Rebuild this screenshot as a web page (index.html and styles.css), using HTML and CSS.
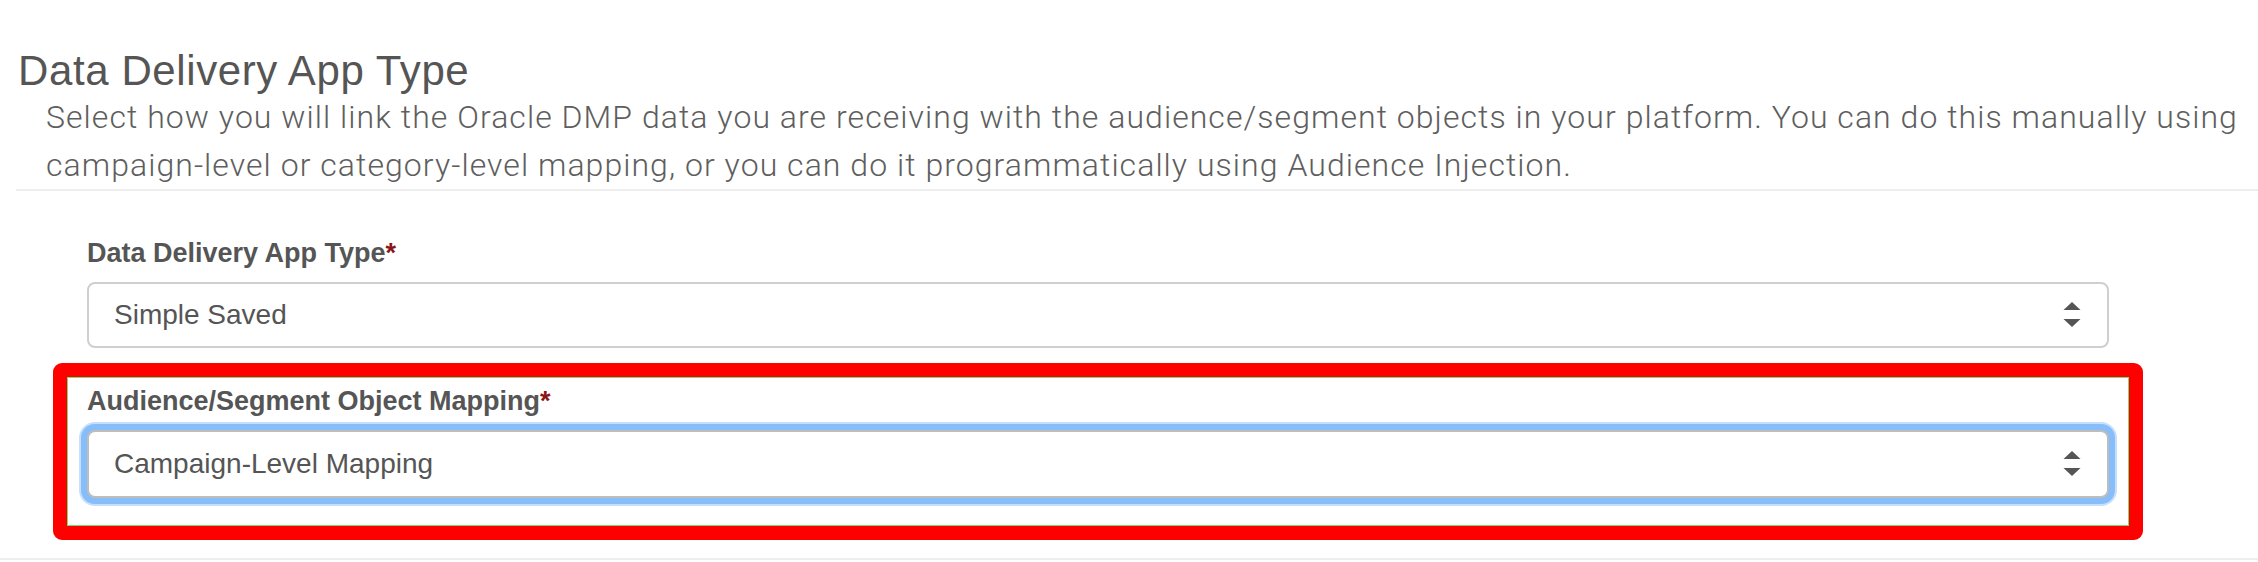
FILE: index.html
```html
<!DOCTYPE html>
<html lang="en">
<head>
<meta charset="utf-8">
<title>Data Delivery App Type</title>
<link rel="stylesheet" href="styles.css">
</head>
<body>
<div class="page">
  <section class="intro">
    <h1 class="intro-title">Data Delivery App Type</h1>
    <p class="intro-desc">Select how you will link the Oracle DMP data you are receiving with the audience/segment objects in your platform. You can do this manually using campaign-level or category-level mapping, or you can do it programmatically using Audience Injection.</p>
  </section>
  <section class="form">
    <div class="field">
      <label class="field-label">Data Delivery App Type<span class="req">*</span></label>
      <div class="select">
        <span class="select-value">Simple Saved</span>
        <svg class="select-arrows" width="18" height="26" viewBox="0 0 18 26"><path d="M9 0 L17.5 8 L0.5 8 Z" fill="#555"/><path d="M0.5 17 L17.5 17 L9 25 Z" fill="#555"/></svg>
      </div>
    </div>
    <div class="field highlight">
      <label class="field-label">Audience/Segment Object Mapping<span class="req">*</span></label>
      <div class="select focused">
        <span class="select-value">Campaign-Level Mapping</span>
        <svg class="select-arrows" width="18" height="26" viewBox="0 0 18 26"><path d="M9 0 L17.5 8 L0.5 8 Z" fill="#555"/><path d="M0.5 17 L17.5 17 L9 25 Z" fill="#555"/></svg>
      </div>
    </div>
  </section>
</div>
</body>
</html>
```

FILE: styles.css
```css
html, body {
  margin: 0;
  padding: 0;
  background: #fff;
}

.page {
  width: 2258px;
  color: #555;
  font-family: "Liberation Sans", Arial, sans-serif;
}

.intro {
  padding-left: 16px;
}

.intro-title {
  margin: 0;
  padding-top: 48px;
  padding-left: 2px;
  font-size: 42px;
  line-height: 45px;
  letter-spacing: 0.6px;
  font-weight: 400;
  color: #555;
}

.intro-desc {
  margin: 0;
  padding-left: 30px;
  padding-right: 0;
  font-family: "Roboto", "Liberation Sans", sans-serif;
  font-weight: 300;
  font-size: 32px;
  line-height: 48px;
  letter-spacing: 1.05px;
  color: #5e5e5e;
  border-bottom: 2px solid #eeeeee;
}

.form {
  display: flex;
  flex-direction: column;
  gap: 15px;
  padding: 46px 149px 18px 87px;
  border-bottom: 2px solid #eeeeee;
}

.field {
  display: flex;
  flex-direction: column;
  gap: 13px;
}

.field-label {
  display: block;
  font-size: 27px;
  line-height: 32px;
  font-weight: 700;
  color: #555;
}

.req {
  color: #8b1414;
}

.select {
  display: flex;
  align-items: center;
  justify-content: space-between;
  height: 66px;
  box-sizing: border-box;
  padding: 0 26px 0 25px;
  border: 2px solid #cfcfcf;
  border-radius: 8px;
  background: #fff;
  font-size: 28px;
  color: #555;
}

.select.focused {
  height: 68px;
  border-color: #bdbdbd;
  box-shadow: 0 0 0 6px #87bdf8, 0 0 0 8px #c4e0fd;
}

.highlight {
  margin: 0 -34px;
  padding: 8px 20px 28px;
  border: 14px solid #ff0000;
  border-radius: 9px;
  box-shadow: inset 0 0 0 1px #6fe06f;
}
```
